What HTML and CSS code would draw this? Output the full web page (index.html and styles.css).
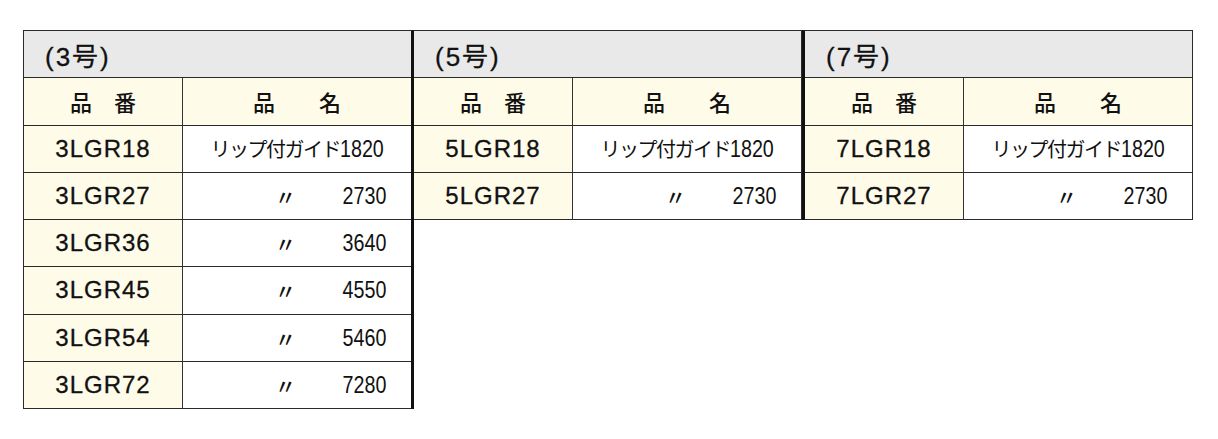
FILE: index.html
```html
<!DOCTYPE html>
<html lang="ja">
<head>
<meta charset="utf-8">
<title>リップ付ガイド</title>
<link rel="stylesheet" href="styles.css">
</head>
<body>
<div class="sheet">
  <table class="spec spec-first">
    <colgroup><col class="c-code"><col class="c-name"></colgroup>
    <tr><th class="size" colspan="2">(3号)</th></tr>
    <tr><th class="hd hd-code">品　番</th><th class="hd hd-name">品　　名</th></tr>
    <tr><td class="code">3LGR18</td><td class="name"><span class="kana">リップ付ガイド</span><span class="num">1820</span></td></tr>
    <tr><td class="code">3LGR27</td><td class="name"><div class="ditto-row"><span class="ditto">〃</span><span class="num">2730</span></div></td></tr>
    <tr><td class="code">3LGR36</td><td class="name"><div class="ditto-row"><span class="ditto">〃</span><span class="num">3640</span></div></td></tr>
    <tr><td class="code">3LGR45</td><td class="name"><div class="ditto-row"><span class="ditto">〃</span><span class="num">4550</span></div></td></tr>
    <tr><td class="code">3LGR54</td><td class="name"><div class="ditto-row"><span class="ditto">〃</span><span class="num">5460</span></div></td></tr>
    <tr><td class="code">3LGR72</td><td class="name"><div class="ditto-row"><span class="ditto">〃</span><span class="num">7280</span></div></td></tr>
  </table>
  <table class="spec spec-mid">
    <colgroup><col class="c-code"><col class="c-name"></colgroup>
    <tr><th class="size" colspan="2">(5号)</th></tr>
    <tr><th class="hd hd-code">品　番</th><th class="hd hd-name">品　　名</th></tr>
    <tr><td class="code">5LGR18</td><td class="name"><span class="kana">リップ付ガイド</span><span class="num">1820</span></td></tr>
    <tr><td class="code">5LGR27</td><td class="name"><div class="ditto-row"><span class="ditto">〃</span><span class="num">2730</span></div></td></tr>
  </table>
  <table class="spec spec-last">
    <colgroup><col class="c-code"><col class="c-name"></colgroup>
    <tr><th class="size" colspan="2">(7号)</th></tr>
    <tr><th class="hd hd-code">品　番</th><th class="hd hd-name">品　　名</th></tr>
    <tr><td class="code">7LGR18</td><td class="name"><span class="kana">リップ付ガイド</span><span class="num">1820</span></td></tr>
    <tr><td class="code">7LGR27</td><td class="name"><div class="ditto-row"><span class="ditto">〃</span><span class="num">2730</span></div></td></tr>
  </table>
</div>
</body>
</html>
```

FILE: styles.css
```css
html, body {
  margin: 0;
  padding: 0;
  background: #ffffff;
}

body {
  font-family: "Liberation Sans", Arial, "Noto Sans CJK JP", sans-serif;
  color: #111111;
}

.sheet {
  display: flex;
  align-items: flex-start;
  padding: 30px 0 0 23px;
}

.spec {
  border-collapse: separate;
  border-spacing: 0;
  table-layout: fixed;
  border-top: 1px solid #2a2a2a;
}

.spec-first {
  border-left: 1px solid #2a2a2a;
  border-right: 3px solid #111111;
}

.spec-mid {
  border-right: 1px solid #2a2a2a;
}

.spec-last {
  border-left: 3px solid #111111;
  border-right: 1px solid #2a2a2a;
}

.c-code { width: 159px; }
.c-name { width: 228px; }

.spec th,
.spec td {
  height: 46.25px;
  padding: 0;
  border-bottom: 1px solid #2a2a2a;
  vertical-align: middle;
}

.size {
  background: #e9e9e9;
  text-align: left;
  padding-left: 21px !important;
  font-weight: normal;
  font-size: 26px;
  letter-spacing: 2px;
  -webkit-text-stroke: 0.3px #111111;
}

.hd {
  background: #fffbe9;
  font-family: "Noto Sans CJK JP", sans-serif;
  font-weight: 500;
  font-size: 22px;
  text-align: center;
}

.hd-code,
.code {
  border-right: 1px solid #333333;
}

.code {
  background: #fffbe9;
  text-align: center;
  font-size: 24px;
  letter-spacing: 1px;
  -webkit-text-stroke: 0.3px #111111;
}

.name {
  background: #ffffff;
  text-align: center;
  white-space: nowrap;
}

.kana {
  font-family: "Noto Sans CJK JP", sans-serif;
  font-size: 20px;
  letter-spacing: -1.5px;
  vertical-align: middle;
}

.num {
  display: inline-block;
  font-family: "Liberation Sans", Arial, sans-serif;
  font-size: 24px;
  transform: scaleX(0.82);
  transform-origin: left center;
  margin-right: -10px;
  vertical-align: middle;
}

.ditto-row {
  display: flex;
  align-items: center;
  padding: 0 25px 0 92px;
}

.ditto {
  font-family: "Noto Sans CJK JP", sans-serif;
  font-size: 21px;
  font-weight: 500;
}

.ditto-row .num {
  margin-left: auto;
  margin-right: 0;
  transform-origin: right center;
}
```
